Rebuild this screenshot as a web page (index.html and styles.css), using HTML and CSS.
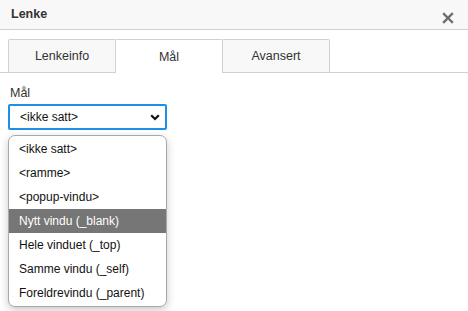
FILE: index.html
```html
<!DOCTYPE html>
<html>
<head>
<meta charset="utf-8">
<link rel="stylesheet" href="styles.css">
</head>
<body>
<div class="dialog">
  <div class="header">
    <span class="title">Lenke</span>
    <span class="close">
      <svg width="12" height="12" viewBox="0 0 12 12"><path d="M2 2 L10 10 M10 2 L2 10" stroke="#6e6e6e" stroke-width="2.4" stroke-linecap="square"/></svg>
    </span>
  </div>
  <div class="tabs">
    <div class="tab">Lenkeinfo</div>
    <div class="tab active">Mål</div>
    <div class="tab">Avansert</div>
  </div>
  <div class="body">
    <div class="label">Mål</div>
    <div class="select">
      <span>&lt;ikke satt&gt;</span>
      <svg class="chev" width="10" height="7" viewBox="0 0 10 7"><path d="M1.2 1.2 L5 5 L8.8 1.2" fill="none" stroke="#111" stroke-width="2.2"/></svg>
    </div>
    <div class="list">
      <div class="item">&lt;ikke satt&gt;</div>
      <div class="item">&lt;ramme&gt;</div>
      <div class="item">&lt;popup-vindu&gt;</div>
      <div class="item sel">Nytt vindu (_blank)</div>
      <div class="item">Hele vinduet (_top)</div>
      <div class="item">Samme vindu (_self)</div>
      <div class="item">Foreldrevindu (_parent)</div>
    </div>
  </div>
</div>
</body>
</html>
```
FILE: styles.css
```css
html, body { margin: 0; padding: 0; background: #fff; }
body { font-family: "Liberation Sans", Arial, sans-serif; font-size: 12.5px; color: #333; }
.dialog { width: 468px; height: 311px; overflow: hidden; }
.header {
  height: 29px; background: #f8f8f8; border-bottom: 1px solid #d1d1d1;
  display: flex; align-items: flex-start; justify-content: space-between;
  padding: 0 14px 0 11px;
}
.title { font-weight: bold; font-size: 12.5px; color: #333; margin-top: 7px; }
.close { margin-top: 12px; display: flex; }
.tabs {
  margin-top: 9px; display: flex; padding-left: 8px;
  border-bottom: 1px solid #d1d1d1; height: 33px;
}
.tab {
  width: 106px; height: 32px; background: #f8f8f8; border: 1px solid #d1d1d1; border-bottom: none;
  border-radius: 2px 2px 0 0;
  display: flex; align-items: center; justify-content: center; color: #333;
  margin-right: -1px;
}
.tab.active { background: #fff; height: 33px; margin-bottom: -1px; }
.body { padding: 13px 8px 0 8px; }
.label { color: #333; padding-left: 2px; line-height: 15px; height: 16px; }
.select {
  margin-top: 2px; height: 22px; border: 2px solid #1e8fe6; border-radius: 2px;
  display: flex; align-items: center; justify-content: space-between; padding: 0 5px 0 10px;
  box-sizing: content-box; width: 140px; color: #111; font-size: 12px;
}
.chev { margin-top: 1px; }
.list {
  margin-top: 5px; width: 157px; border: 1px solid #a9a9a9; border-radius: 7px;
  box-shadow: 0 3px 9px rgba(0,0,0,0.22); overflow: hidden; background: #fff; padding: 1px 0;
  font-size: 12px;
}
.item { height: 24px; line-height: 24px; padding-left: 10px; color: #111; }
.item.sel { background: #767676; color: #fff; }
```
